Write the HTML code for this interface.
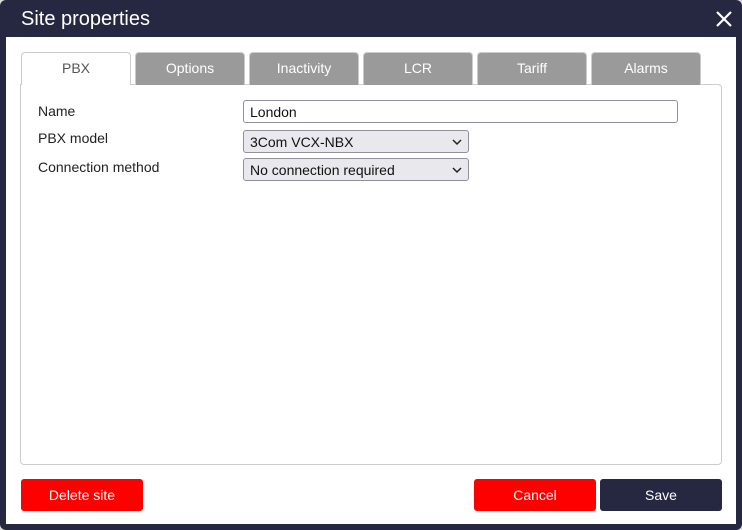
<!DOCTYPE html>
<html><head><style>
*{box-sizing:border-box;margin:0;padding:0}
html,body{width:742px;height:530px;overflow:hidden;background:#ddd;font-family:"Liberation Sans",sans-serif}
.frame{position:absolute;left:0;top:0;width:742px;height:530px;background:#262842;border-radius:6px}
.title{position:absolute;left:21px;top:8px;color:#fff;font-size:20px}
.x{position:absolute;left:713px;top:8px;width:22px;height:22px}
.body{position:absolute;left:6px;top:37px;width:730px;height:487px;background:#fff}
.tab{position:absolute;top:52px;height:33px;width:110px;background:#9a9a9a;color:#fff;font-size:14px;text-align:center;line-height:31px;border:1px solid #ccc;border-bottom:none;border-radius:4px 4px 0 0}
.tab.a{background:#fff;color:#555;z-index:2;height:33px}
.panel{position:absolute;left:20px;top:84px;width:702px;height:381px;border:1px solid #ccc;border-radius:0 4px 4px 4px}
.lbl{position:absolute;left:38px;font-size:14px;color:#222}
.in{position:absolute;left:243px;font-size:14px;color:#111;padding-left:6px;border:1px solid #8f8f9d;border-radius:3px}
.sel{background:#e9e9ed;width:226px;height:23px;line-height:23px}
.sel svg{position:absolute;right:6px;top:7px}
.btn{position:absolute;top:479px;height:32px;width:122px;border-radius:3px;color:#fff;font-size:14px;text-align:center;line-height:32px}
</style></head><body>
<div class="frame"></div>
<div class="title">Site properties</div>
<svg class="x" viewBox="0 0 22 22"><path d="M4 4L18 18M18 4L4 18" stroke="#fff" stroke-width="2.2"/></svg>
<div class="body"></div>
<div class="panel"></div>
<div class="tab a" style="left:21px">PBX</div>
<div class="tab" style="left:135px">Options</div>
<div class="tab" style="left:249px">Inactivity</div>
<div class="tab" style="left:363px">LCR</div>
<div class="tab" style="left:477px">Tariff</div>
<div class="tab" style="left:591px">Alarms</div>
<div class="lbl" style="top:103px">Name</div>
<div class="lbl" style="top:130px">PBX model</div>
<div class="lbl" style="top:159px">Connection method</div>
<div class="in" style="top:100px;width:435px;height:23px;line-height:23px">London</div>
<div class="in sel" style="top:130px">3Com VCX-NBX<svg width="10" height="8" viewBox="0 0 10 8"><path d="M1 2L5 6L9 2" fill="none" stroke="#222" stroke-width="1.5"/></svg></div>
<div class="in sel" style="top:158px">No connection required<svg width="10" height="8" viewBox="0 0 10 8"><path d="M1 2L5 6L9 2" fill="none" stroke="#222" stroke-width="1.5"/></svg></div>
<div class="btn" style="left:21px;background:#f00">Delete site</div>
<div class="btn" style="left:474px;background:#f00">Cancel</div>
<div class="btn" style="left:600px;background:#262842">Save</div>
</body></html>
